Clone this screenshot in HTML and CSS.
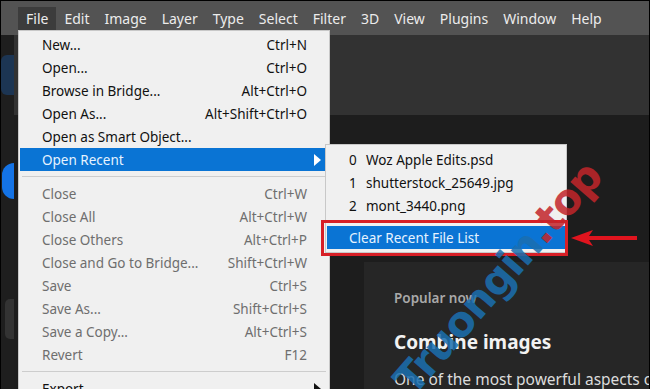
FILE: index.html
```html
<!DOCTYPE html>
<html lang="en">
<head>
  <meta charset="UTF-8">
  <title>Photoshop - File menu</title>
  <link rel="stylesheet" href="styles.css">
</head>
<body>
  <div class="app">
    <div class="menubar">
      <span class="mb-item active">File</span>
      <span class="mb-item">Edit</span>
      <span class="mb-item">Image</span>
      <span class="mb-item">Layer</span>
      <span class="mb-item">Type</span>
      <span class="mb-item">Select</span>
      <span class="mb-item">Filter</span>
      <span class="mb-item">3D</span>
      <span class="mb-item">View</span>
      <span class="mb-item">Plugins</span>
      <span class="mb-item">Window</span>
      <span class="mb-item">Help</span>
    </div>

    <div class="workspace">
      <div class="sidebar">
        <div class="side-card"></div>
        <div class="side-dot"></div>
        <div class="side-pill"></div>
      </div>
      <div class="main">
        <div class="top-band"></div>
        <div class="content">
          <div class="panel">
            <div class="panel-label">Popular now</div>
            <div class="panel-title">Combine images</div>
            <div class="panel-text">One of the most powerful aspects of Photoshop</div>
          </div>
        </div>
      </div>
    </div>

    <!-- File menu -->
    <div class="menu">
      <div class="row"><span>New...</span><span>Ctrl+N</span></div>
      <div class="row"><span>Open...</span><span>Ctrl+O</span></div>
      <div class="row"><span>Browse in Bridge...</span><span>Alt+Ctrl+O</span></div>
      <div class="row"><span>Open As...</span><span>Alt+Shift+Ctrl+O</span></div>
      <div class="row"><span>Open as Smart Object...</span><span></span></div>
      <div class="row hover"><span>Open Recent</span><span class="caret"></span></div>
      <div class="sep"></div>
      <div class="row off"><span>Close</span><span>Ctrl+W</span></div>
      <div class="row off"><span>Close All</span><span>Alt+Ctrl+W</span></div>
      <div class="row off"><span>Close Others</span><span>Alt+Ctrl+P</span></div>
      <div class="row off"><span>Close and Go to Bridge...</span><span>Shift+Ctrl+W</span></div>
      <div class="row off"><span>Save</span><span>Ctrl+S</span></div>
      <div class="row off"><span>Save As...</span><span>Shift+Ctrl+S</span></div>
      <div class="row off"><span>Save a Copy...</span><span>Alt+Ctrl+S</span></div>
      <div class="row off"><span>Revert</span><span>F12</span></div>
      <div class="sep"></div>
      <div class="row"><span>Export</span><span class="caret dark"></span></div>
    </div>

    <!-- Open Recent submenu -->
    <div class="submenu">
      <div class="sub-row"><span class="num">0</span>Woz Apple Edits.psd</div>
      <div class="sub-row"><span class="num">1</span>shutterstock_25649.jpg</div>
      <div class="sub-row"><span class="num">2</span>mont_3440.png</div>
      <div class="sub-gap"></div>
      <div class="sub-row hover">Clear Recent File List</div>
    </div>

    <div class="callout"></div>
    <svg class="arrow" width="72" height="20" viewBox="0 0 72 20">
      <path d="M2 10 L24 2 L20 8 L68 8 L68 12 L20 12 L24 18 Z" fill="#e0141e"/>
    </svg>

    <div class="watermark"><span class="wm-blue">Truongin</span><span class="wm-red">.top</span></div>
  </div>
</body>
</html>
```

FILE: styles.css
```css
body {
  margin: 0;
  padding: 0;
  background: #000;
  font-family: 'Noto Sans', 'Open Sans', sans-serif;
}

.app {
  position: relative;
  width: 648px;
  height: 388px;
  border: 1px solid #000;
  border-bottom: 0;
  background: #1c1c1c;
  overflow: hidden;
}

.menubar {
  display: flex;
  align-items: center;
  height: 33px;
  padding: 1px 0 0 17px;
  background: #535353;
  color: #ececec;
  font-size: 14px;
}

.mb-item {
  padding: 2px 7px 3px;
  margin-right: 1px;
}

.mb-item.active {
  background: #3c3c3c;
  padding: 2px 8px 3px;
}

.workspace {
  display: flex;
  height: 355px;
}

.sidebar {
  width: 17px;
  background: #1e1e1e;
  display: flex;
  flex-direction: column;
  align-items: flex-end;
  padding-top: 20px;
}

.side-card {
  width: 13px;
  height: 40px;
  background: #1c3553;
  border-radius: 6px 0 0 6px;
}

.side-dot {
  width: 12px;
  height: 36px;
  margin-top: 68px;
  background: #1473e6;
  border-radius: 18px 0 0 18px;
}

.side-pill {
  width: 9px;
  height: 40px;
  margin-top: 100px;
  background: #333;
  border-radius: 5px 0 0 5px;
}

.main {
  flex: 1;
  display: flex;
  flex-direction: column;
}

.top-band {
  height: 81px;
  background: #323232;
}

.content {
  flex: 1;
  background: #1d1d1d;
  padding: 147px 0 0 350px;
}

.panel {
  height: 100%;
  background: #262626;
  padding: 27px 0 0 30px;
  box-sizing: border-box;
  white-space: nowrap;
  overflow: hidden;
}

.panel-label {
  color: #a9a9a9;
  font-size: 13.5px;
  font-weight: 600;
}

.panel-title {
  margin-top: 22px;
  color: #f2f2f2;
  font-size: 19px;
  font-weight: 700;
}

.panel-text {
  margin-top: 13px;
  color: #dcdcdc;
  font-size: 15.5px;
}

/* menus */
.menu {
  position: absolute;
  left: 17px;
  top: 29px;
  width: 308px;
  padding: 2px 1px 0;
  background: #f0f0f0;
  border: 1px solid #c8c8c8;
  border-bottom: 0;
  font-size: 13.5px;
  color: #111;
}

.row {
  display: flex;
  justify-content: space-between;
  align-items: center;
  height: 23px;
  padding: 0 21px 0 22px;
}

.row.off {
  color: #6e6e6e;
}

.row.hover {
  background: #0a74d4;
  color: #e6f3ff;
}

.caret {
  width: 0;
  height: 0;
  margin-right: -14px;
  border-top: 6px solid transparent;
  border-bottom: 6px solid transparent;
  border-left: 7px solid #fff;
}

.caret.dark {
  border-left-color: #111;
}

.sep {
  height: 1px;
  margin: 5px 2px 5px 2px;
  background: #cdcdcd;
}

.submenu {
  position: absolute;
  left: 324px;
  top: 143px;
  width: 238px;
  padding: 3px 1px 3px;
  background: #f0f0f0;
  border: 1px solid #c8c8c8;
  font-size: 13.5px;
  color: #111;
}

.sub-row {
  display: flex;
  align-items: center;
  height: 23px;
  padding-left: 22px;
}

.num {
  width: 17px;
}

.sub-gap {
  height: 9px;
}

.sub-row.hover {
  background: #0a74d4;
  color: #e6f3ff;
}

.callout {
  position: absolute;
  left: 320px;
  top: 219px;
  width: 241px;
  height: 30px;
  border: 3px solid #d71f26;
}

.arrow {
  position: absolute;
  left: 568px;
  top: 227px;
}

.watermark {
  position: absolute;
  left: 402px;
  top: 366px;
  transform: rotate(-49deg);
  transform-origin: 0 50%;
  font-family: 'DejaVu Sans', sans-serif;
  font-weight: 700;
  font-size: 42px;
  letter-spacing: -1px;
  line-height: 1;
  white-space: nowrap;
  opacity: 0.85;
}

.wm-blue {
  color: #1b6fb0;
}

.wm-red {
  color: #c3262b;
}
```
